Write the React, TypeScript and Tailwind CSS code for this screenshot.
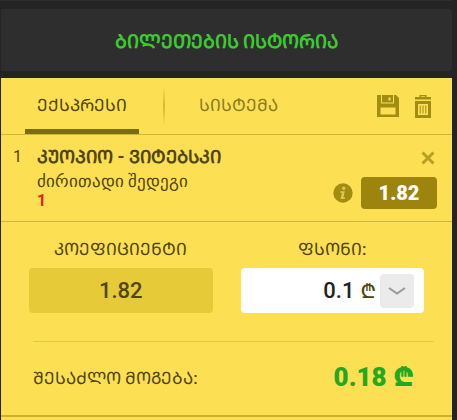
import React, { useState } from 'react';

const selection = {
  index: 1,
  teams: 'ᲙᲣᲝᲞᲘᲝ - ᲕᲘᲢᲔᲑᲡᲙᲘ',
  market: 'ძირითადი შედეგი',
  pick: '1',
  odds: '1.82',
};

function SaveIcon() {
  return (
    <svg width="22" height="22" viewBox="0 0 22 22" fill="#a08d12" aria-hidden="true">
      <path
        fillRule="evenodd"
        d="M0 0h4v8.500h13V0h2l3 3v19H0V0zM3.500 12.500v7h15v-7h-15z"
      />
      <path fillRule="evenodd" d="M5 0h11v7.500H5V0zM11.500 2.500v3h2v-3h-2z" />
    </svg>
  );
}

function TrashIcon() {
  return (
    <svg width="16" height="23" viewBox="0 0 16 23" fill="#a08d12" aria-hidden="true">
      <path fillRule="evenodd" d="M4.500 0h7v2H16v2.500H0V2h4.500V0zM6 1.200V2h4v-.8H6z" />
      <path fillRule="evenodd" d="M0 6h16v17H0V6zM3 9v11h10V9H3z" />
      <path d="M4.700 10.500h1v8h-1zM7.500 10.500h1v8h-1zM10.300 10.500h1v8h-1z" />
    </svg>
  );
}

function CloseIcon() {
  return (
    <svg width="14" height="14" viewBox="0 0 14 14" stroke="#b8a023" strokeWidth="3" aria-hidden="true">
      <path d="M1.500 1.500l11 11M12.500 1.500l-11 11" />
    </svg>
  );
}

function InfoIcon() {
  return (
    <svg width="20" height="20" viewBox="0 0 20 20" aria-hidden="true">
      <circle cx="10" cy="10" r="9.700" fill="#a08d12" />
      <circle cx="10.700" cy="5.300" r="1.700" fill="#dfc648" />
      <path d="M7.500 8.300h4.300l-1.300 6h1.600l-.4 1.700H7.500l1.400-6.200H7.200z" fill="#dfc648" />
    </svg>
  );
}

export default function App() {
  const [tab, setTab] = useState('express');
  const [stake, setStake] = useState('0.1');

  return (
    <div className="min-h-screen bg-[#242424] pl-px pr-[5px] font-['Roboto','Noto_Sans',sans-serif] text-[#4f460c]">
      <div className="h-px bg-[#2e2e2e]" />

      <button
        type="button"
        className="mt-2 flex h-[62px] w-full items-center justify-center rounded-xs bg-[#2e2e2e] pt-1 text-[19px] font-bold text-[#3bcb2f]"
      >
        ᲑᲘᲚᲔᲗᲔᲑᲘᲡ ᲘᲡᲢᲝᲠᲘᲐ
      </button>

      <div className="mt-[7px] bg-[#fddf53]">
        {/* Bet type tabs */}
        <div className="flex h-[57px] items-stretch border-b border-[#cfb53c] pr-[21px] pl-6">
          <button
            type="button"
            onClick={() => setTab('express')}
            className={`w-[114px] border-b-[5px] pt-1 text-[17px] font-medium ${
              tab === 'express' ? 'border-[#7c6c10] text-[#4f460c]' : 'border-transparent text-[#8b7b1f]'
            }`}
          >
            ᲔᲥᲡᲞᲠᲔᲡᲘ
          </button>
          <div className="mx-6 my-2 w-0.5 bg-linear-to-b from-transparent via-[#d9b92c] to-transparent" />
          <button
            type="button"
            onClick={() => setTab('system')}
            className={`border-b-[5px] px-2.5 pt-1 text-[17px] font-medium ${
              tab === 'system' ? 'border-[#7c6c10] text-[#4f460c]' : 'border-transparent text-[#8b7b1f]'
            }`}
          >
            ᲡᲘᲡᲢᲔᲛᲐ
          </button>
          <div className="ml-auto flex items-center gap-4">
            <button type="button" aria-label="Save">
              <SaveIcon />
            </button>
            <button type="button" aria-label="Delete">
              <TrashIcon />
            </button>
          </div>
        </div>

        {/* Selection */}
        <div className="flex h-[87px] border-b border-[#cfb53c] pt-3 pr-[15px] pl-3">
          <span className="w-6 text-base leading-5">{selection.index}</span>
          <div className="flex-1 whitespace-nowrap">
            <h2 className="text-lg leading-5 font-bold">{selection.teams}</h2>
            <p className="mt-1 text-[17px] leading-5">{selection.market}</p>
            <p className="text-base leading-5 font-bold text-[#dc2219]">{selection.pick}</p>
          </div>
          <div className="flex flex-col items-end justify-between pt-1 pb-3">
            <button type="button" aria-label="Remove" className="mr-0.5">
              <CloseIcon />
            </button>
            <div className="flex items-center gap-2">
              <button type="button" aria-label="Info">
                <InfoIcon />
              </button>
              <span className="flex h-8 w-[76px] items-center justify-center rounded-sm bg-[#9c840f] text-xl font-black text-white">
                {selection.odds}
              </span>
            </div>
          </div>
        </div>

        {/* Stake */}
        <div className="grid grid-cols-2 gap-7 pt-4 pr-7 pl-7">
          <div className="flex flex-col gap-2 text-center">
            <span className="text-[17px] leading-[22px] font-medium">ᲙᲝᲔᲤᲘᲪᲘᲔᲜᲢᲘ</span>
            <div className="flex h-[45px] items-center justify-center rounded-sm bg-[#e7ca37] text-[22px] font-medium">
              1.82
            </div>
          </div>
          <div className="flex flex-col gap-2 text-center">
            <label htmlFor="stake" className="text-[17px] leading-[22px] font-medium">
              ᲤᲡᲝᲜᲘ:
            </label>
            <div className="flex h-[45px] items-center rounded-sm bg-white pr-2.5">
              <input
                id="stake"
                value={stake}
                onChange={(e) => setStake(e.target.value)}
                className="min-w-0 flex-1 text-right text-[22px] font-medium text-[#222222] outline-none"
              />
              <span className="mr-1 ml-1.5 text-xl font-medium">₾</span>
              <button
                type="button"
                aria-label="Choose stake"
                className="flex size-[34px] items-center justify-center rounded-sm bg-[#ebebeb]"
              >
                <svg width="18" height="8" viewBox="0 0 18 8" fill="none" stroke="#999999" strokeWidth="2">
                  <path d="M1 1l8 5.500L17 1" />
                </svg>
              </button>
            </div>
          </div>
        </div>

        {/* Possible win */}
        <div className="mt-7 mr-[18px] ml-8 flex h-[74px] items-center justify-between border-t border-[#e3c846] pr-5">
          <span className="text-[17px] font-medium">ᲨᲔᲡᲐᲫᲚᲝ ᲛᲝᲒᲔᲑᲐ:</span>
          <strong className="pb-1 text-[26px] leading-8 font-black text-[#24a81f]">0.18 ₾</strong>
        </div>
        <div className="h-0.5 bg-[#cdb030]" />
        <div className="h-[3px]" />
      </div>
    </div>
  );
}
